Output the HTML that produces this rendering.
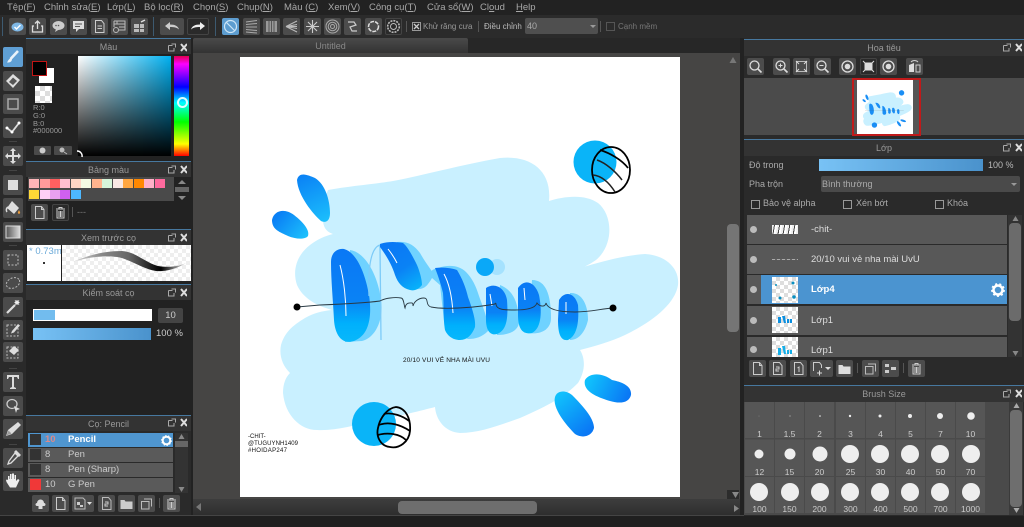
<!DOCTYPE html>
<html><head><meta charset="utf-8"><style>
html,body{margin:0;padding:0;width:1024px;height:527px;overflow:hidden;background:#222;font-family:"Liberation Sans","Noto Sans CJK SC",sans-serif;font-size:9px;color:#aaa}
div,span.a,svg.a{position:absolute}
.m{top:2px;font-size:9.5px;line-height:11px;color:#a8a8a8;white-space:nowrap}
.b{width:17px;height:17px;background:#4c4c4c;border-radius:2px}
.b svg,.t svg{position:absolute;left:0;top:0;width:100%;height:100%}
.bd{background:#2a2a2a;box-shadow:0 0 0 1px #444 inset}
.t{left:3px;width:20px;height:20px;background:#4b4b4b;border-radius:2px}
.sp{left:9px;width:8px;height:1px;background:#444}
.h{height:15px;background:#333;color:#999;text-align:center;line-height:16px;font-size:9px}
.l{height:1px;background:#47789f}
.ic{width:16px;height:9px}
.ck{background-color:#fff;background-image:linear-gradient(45deg,#ddd 25%,transparent 25%,transparent 75%,#ddd 75%),linear-gradient(45deg,#ddd 25%,transparent 25%,transparent 75%,#ddd 75%);background-size:8px 8px;background-position:0 0,4px 4px}
.s{width:10px;height:9px}
.r{left:28px;width:145px;height:14px;background:#5a5a5a;color:#ccc;line-height:15px;font-size:9.5px}
.lr{left:747px;width:260px;background:#585858}
.lt{left:811px;color:#ddd;font-size:9.5px;white-space:nowrap}
.d{width:7px;height:7px;border-radius:50%;background:#bbb;left:750px}
.th{left:772px;width:26px;height:26px}
.c{width:29px;background:#565656}
.n{width:29px;text-align:center;color:#ccc;font-size:8.5px;line-height:10px}
.o{border-radius:50%;background:#eee}
.cb{width:7px;height:7px;border:1px solid #999}
.tx{white-space:nowrap;line-height:11px}
</style></head><body>

<!-- menu -->
<div class="m" style="left:7px">Tệp(<u>F</u>)</div>
<div class="m" style="left:44px">Chỉnh sửa(<u>E</u>)</div>
<div class="m" style="left:107px">Lớp(<u>L</u>)</div>
<div class="m" style="left:144px">Bộ lọc(<u>R</u>)</div>
<div class="m" style="left:193px">Chọn(<u>S</u>)</div>
<div class="m" style="left:237px">Chụp(<u>N</u>)</div>
<div class="m" style="left:284px">Màu (<u>C</u>)</div>
<div class="m" style="left:328px">Xem(<u>V</u>)</div>
<div class="m" style="left:369px">Công cụ(<u>T</u>)</div>
<div class="m" style="left:427px">Cửa sổ(<u>W</u>)</div>
<div class="m" style="left:480px">Cl<u>o</u>ud</div>
<div class="m" style="left:516px"><u>H</u>elp</div>

<!-- toolbar -->
<div style="left:0;top:15px;width:1024px;height:23px;background:#2b2b2b"></div>
<div style="left:2px;top:17px;width:1px;height:19px;background:#3d5a70"></div>
<div class="b" style="left:9px;top:18px"><svg viewBox="0 0 17 17"><ellipse cx="8.500" cy="9" rx="6" ry="4.500" fill="#7fb8e6"/><path d="M5.500 9l2 2 4-4" stroke="#fff" stroke-width="1.400" fill="none"/></svg></div>
<div class="b" style="left:29px;top:18px"><svg viewBox="0 0 17 17"><path d="M5 8H3.500v6h10V8H12M8.500 11V3M6 5.500l2.500-2.500L11 5.500" stroke="#ddd" stroke-width="1.300" fill="none"/></svg></div>
<div class="b" style="left:50px;top:18px"><svg viewBox="0 0 17 17"><ellipse cx="8.500" cy="7.500" rx="6" ry="4.500" fill="#ccc"/><path d="M6 11l-1 3 4-2.500z" fill="#ccc"/><circle cx="6" cy="7.500" r=".8" fill="#555"/><circle cx="8.500" cy="7.500" r=".8" fill="#555"/></svg></div>
<div class="b" style="left:70px;top:18px"><svg viewBox="0 0 17 17"><path d="M3 3h11v8H9l-3 3v-3H3z" fill="#ddd"/><path d="M5 6h7M5 8.500h5" stroke="#555"/></svg></div>
<div class="b" style="left:91px;top:18px"><svg viewBox="0 0 17 17"><path d="M4.500 2.500h6l2.500 3v9h-8.500zM6.500 8h4.500M6.500 10.500h4.500" stroke="#ccc" fill="none"/></svg></div>
<div class="b" style="left:111px;top:18px"><svg viewBox="0 0 17 17"><path d="M3 3h11v9H8M3 3v6M3 6h11M6 3v3M8 9h6" stroke="#bbb" fill="none"/><circle cx="5" cy="12" r="2.500" fill="none" stroke="#bbb"/></svg></div>
<div class="b" style="left:131px;top:18px"><svg viewBox="0 0 17 17"><path d="M3 6h5v4H3zM9 6h4v4H9zM3 11h5v3H3zM9 11h4v3H9z" fill="#bbb"/><path d="M10 4l4-2" stroke="#ddd" stroke-width="1.500"/></svg></div>
<div style="left:153px;top:17px;width:1px;height:19px;background:#3d5a70"></div>
<div class="b" style="left:160px;top:18px;width:24px"><svg viewBox="0 0 24 17"><path d="M5 8l5-4v2.500c5 0 8 1.500 9 5-2-2-5-2.500-9-2.500v3z" fill="#ccc"/></svg></div>
<div class="b bd" style="left:187px;top:18px;width:22px"><svg viewBox="0 0 22 17"><path d="M18 8l-5-4v2.500c-5 0-8 1.500-9 5 2-2 5-2.500 9-2.500v3z" fill="#eee"/></svg></div>
<div style="left:215px;top:17px;width:1px;height:19px;background:#3d5a70"></div>
<div class="b" style="left:222px;top:18px;background:#5d9dd0"><svg viewBox="0 0 17 17"><circle cx="8.500" cy="8.500" r="6" fill="none" stroke="#cfe6f7" stroke-width="1.200"/><path d="M4.500 4.500l8 8" stroke="#cfe6f7" stroke-width="1.200"/></svg></div>
<div class="b" style="left:243px;top:18px"><svg viewBox="0 0 17 17"><path d="M3 4l11-1.500M3 6.500l11-1M3 9h11M3 11.500l11 1M3 14l11 1" stroke="#aaa"/></svg></div>
<div class="b" style="left:263px;top:18px"><svg viewBox="0 0 17 17"><path d="M3 3h11v11H3z" fill="#999"/><path d="M6 3v11M8.500 3v11M11 3v11" stroke="#555"/></svg></div>
<div class="b" style="left:283px;top:18px"><svg viewBox="0 0 17 17"><path d="M3 8.500L14 3M3 8.500L14 6.500M3 8.500h11M3 8.500l11 2M3 8.500L14 14" stroke="#bbb"/></svg></div>
<div class="b" style="left:304px;top:18px"><svg viewBox="0 0 17 17"><path d="M8.500 2v13M2 8.500h13M4 4l9 9M13 4l-9 9" stroke="#ccc" stroke-width="1.100"/></svg></div>
<div class="b" style="left:324px;top:18px"><svg viewBox="0 0 17 17"><circle cx="8.500" cy="8.500" r="6.500" fill="none" stroke="#aaa"/><circle cx="8.500" cy="8.500" r="4.300" fill="none" stroke="#aaa"/><circle cx="8.500" cy="8.500" r="2" fill="none" stroke="#aaa"/></svg></div>
<div class="b" style="left:344px;top:18px"><svg viewBox="0 0 17 17"><path d="M4 4h6l2 3-6 2 2 4h5" stroke="#ccc" stroke-width="1.200" fill="none"/></svg></div>
<div class="b" style="left:365px;top:18px"><svg viewBox="0 0 17 17"><circle cx="8.500" cy="8.500" r="5" fill="none" stroke="#ddd" stroke-width="1.500" stroke-dasharray="4 1"/></svg></div>
<div class="b bd" style="left:385px;top:18px"><svg viewBox="0 0 17 17"><circle cx="8.500" cy="8.500" r="5.800" fill="none" stroke="#bbb" stroke-width="1.600" stroke-dasharray="2 1"/><circle cx="8.500" cy="8.500" r="3" fill="none" stroke="#bbb"/></svg></div>
<div style="left:406px;top:21px;width:1px;height:11px;background:#555"></div>
<div style="left:412px;top:22px;width:7px;height:7px;border:1px solid #999"><svg class="a" style="left:0;top:0" width="7" height="7"><path d="M1 1l5 5M6 1l-5 5" stroke="#ccc" stroke-width="1.300"/></svg></div>
<div class="tx" style="left:423px;top:21px;color:#999;font-size:8px">Khử răng cưa</div>
<div style="left:478px;top:21px;width:1px;height:11px;background:#555"></div>
<div class="tx" style="left:484px;top:21px;color:#bbb;font-size:8px">Điều chỉnh</div>
<div style="left:525px;top:18px;width:73px;height:16px;background:#4f4f4f;border-radius:2px;color:#aaa;line-height:17px;text-indent:2px">40</div>
<div style="left:590px;top:25px;border:3px solid transparent;border-top:3px solid #999"></div>
<div style="left:600px;top:21px;width:1px;height:11px;background:#555"></div>
<div style="left:606px;top:22px;width:7px;height:7px;border:1px solid #555"></div>
<div class="tx" style="left:618px;top:21px;color:#777;font-size:8px">Cạnh mềm</div>

<!-- tools -->
<div style="left:0;top:38px;width:26px;height:478px;background:#2a2a2a"></div>
<div class="sp" style="top:141px"></div><div class="sp" style="top:170px"></div><div class="sp" style="top:245px"></div><div class="sp" style="top:368px"></div><div class="sp" style="top:444px"></div>
<div class="t" style="top:47px;background:#5f9fd4"><svg viewBox="0 0 20 20"><path d="M15 4L7.500 12" stroke="#e8f2fa" stroke-width="2.600"/><path d="M7.500 11.500c-2 .5-2.500 2.500-3.500 4 2 0 4.500 0 5-3z" fill="#e8f2fa"/></svg></div>
<div class="t" style="top:71px"><svg viewBox="0 0 20 20"><path d="M10 3l7 6-7 8-7-7z" fill="#ddd"/><path d="M6 11l4-4.500 4 3.500-4 4z" fill="#555"/></svg></div>
<div class="t" style="top:94px"><svg viewBox="0 0 20 20"><rect x="5" y="5" width="10" height="10" fill="none" stroke="#aaa" stroke-width="1.500"/></svg></div>
<div class="t" style="top:118px"><svg viewBox="0 0 20 20"><path d="M4 10l5 4 7-9" stroke="#ddd" stroke-width="1.800" fill="none"/><circle cx="4" cy="10" r="1.500" fill="#fff"/><circle cx="9" cy="14" r="1.500" fill="#fff"/><circle cx="16" cy="5" r="1.500" fill="#fff"/></svg></div>
<div class="t" style="top:146px"><svg viewBox="0 0 20 20"><path d="M10 2l3 3h-2v4h4v-2l3 3-3 3v-2h-4v4h2l-3 3-3-3h2v-4H5v2l-3-3 3-3v2h4V5H7z" fill="#ddd"/></svg></div>
<div class="t" style="top:175px"><svg viewBox="0 0 20 20"><rect x="5" y="5" width="10" height="10" fill="#ddd"/></svg></div>
<div class="t" style="top:198px"><svg viewBox="0 0 20 20"><path d="M9 3l7 7-5 6-7-6z" fill="#ddd"/><path d="M5 9c-2 1-2 4-1 5" stroke="#ddd" stroke-width="1.500" fill="none"/><path d="M16 12c1 2 2 3 0 4-2-1-1-2 0-4z" fill="#e89a3c"/></svg></div>
<div class="t" style="top:222px"><svg viewBox="0 0 20 20"><defs><linearGradient id="tg" x1="0" y1="0" x2="1" y2="0"><stop offset="0" stop-color="#555"/><stop offset="1" stop-color="#ddd"/></linearGradient></defs><rect x="3" y="4" width="14" height="12" fill="url(#tg)" stroke="#ddd"/></svg></div>
<div class="t" style="top:250px"><svg viewBox="0 0 20 20"><rect x="5" y="5" width="10" height="10" fill="none" stroke="#bbb" stroke-dasharray="2 1.500"/></svg></div>
<div class="t" style="top:273px"><svg viewBox="0 0 20 20"><ellipse cx="10" cy="10" rx="7" ry="5" fill="none" stroke="#bbb" stroke-dasharray="2 1.500" transform="rotate(-25 10 10)"/></svg></div>
<div class="t" style="top:297px"><svg viewBox="0 0 20 20"><path d="M4 16l8-8" stroke="#ddd" stroke-width="2.200"/><path d="M14 3v5M11.500 5.500h5M12 3.500l4 4M16 3.500l-4 4" stroke="#eee"/></svg></div>
<div class="t" style="top:320px"><svg viewBox="0 0 20 20"><rect x="4" y="5" width="11" height="11" fill="none" stroke="#bbb" stroke-dasharray="2 1.500"/><path d="M9 11l6-7 2 1.500-6 7-3 1z" fill="#ddd"/></svg></div>
<div class="t" style="top:342px"><svg viewBox="0 0 20 20"><rect x="4" y="5" width="11" height="11" fill="none" stroke="#bbb" stroke-dasharray="2 1.500"/><path d="M6 9l5-5 5 4-5 5z" fill="#ddd"/></svg></div>
<div class="t" style="top:372px"><svg viewBox="0 0 20 20"><path d="M4 3h12v4h-1l-1-2h-3v10l2 1v1H7v-1l2-1V5H6L5 7H4z" fill="#ddd"/></svg></div>
<div class="t" style="top:396px"><svg viewBox="0 0 20 20"><ellipse cx="9" cy="8" rx="5" ry="4.500" fill="none" stroke="#ccc" stroke-width="1.300"/><path d="M11 10l6 3-3 1-1 3z" fill="#ddd"/></svg></div>
<div class="t" style="top:419px"><svg viewBox="0 0 20 20"><path d="M15 3l3 3-9 9-6 2 2-6z" fill="#ddd"/><path d="M3.500 16.500l2-5 3 3z" fill="#999"/></svg></div>
<div class="t" style="top:448px"><svg viewBox="0 0 20 20"><path d="M12 5l3 3-7 7-3 1 1-3z" fill="none" stroke="#ddd" stroke-width="1.300"/><path d="M11 4l2-2 5 5-2 2z" fill="#ddd"/></svg></div>
<div class="t" style="top:471px"><svg viewBox="0 0 20 20"><path d="M5 9V5h1.500v3h.5V3h1.500v5h.5V2.500H11V8h.5V4H13v6l2-2 1.500 1-3.500 7.500H7L3.500 11 3 9l1-.5z" fill="#eee"/></svg></div>

<!-- left: colour panel -->
<div class="l" style="left:26px;top:38px;width:165px"></div>
<div class="h" style="left:26px;top:39px;width:165px">Màu</div>
<div class="ic" style="left:167px;top:43px"><svg class="a" style="left:0;top:0" width="20" height="9"><path d="M1.500 2.500h4M1.500 2.500v5.500h5.500V5M4.500 1h4v3.500" stroke="#aaa" fill="none"/><path d="M14 1l6 7M20 1l-6 7" stroke="#ddd" stroke-width="2"/></svg></div>
<div style="left:26px;top:54px;width:165px;height:107px;background:#222"></div>
<div style="left:39px;top:68px;width:15px;height:15px;background:#fff"></div>
<div style="left:32px;top:61px;width:13px;height:13px;background:#000;border:1.500px solid #c01515"></div>
<div class="ck" style="left:35px;top:86px;width:17px;height:17px;background-size:10px 10px;background-position:0 0,5px 5px"></div>
<div class="tx" style="left:33px;top:104px;font-size:7.500px;line-height:8px;color:#999">R:0<br>G:0</div>
<div class="tx" style="left:33px;top:120px;height:6px;overflow:hidden;font-size:7.500px;line-height:8px;color:#999">B:0</div>
<div class="tx" style="left:33px;top:126px;font-size:7.500px;line-height:9px;color:#999">#000000</div>
<div style="left:34px;top:146px;width:17px;height:9px;background:#4a4a4a;border-radius:1px"><svg class="a" style="left:0;top:0" width="17" height="9"><circle cx="8.500" cy="4.500" r="3" fill="#ccc"/></svg></div>
<div style="left:54px;top:146px;width:18px;height:9px;background:#4a4a4a;border-radius:1px"><svg class="a" style="left:0;top:0" width="18" height="9"><circle cx="8" cy="4" r="2.500" fill="#bbb"/><path d="M10 6l3 2" stroke="#bbb"/></svg></div>
<div style="left:78px;top:56px;width:93px;height:100px;background:linear-gradient(to bottom,transparent,#000),linear-gradient(to right,#fff,#00b0f0)"></div>
<svg class="a" style="left:76px;top:150px" width="8" height="8"><path d="M1 1a5 5 0 0 1 5 6" stroke="#fff" stroke-width="1.500" fill="none"/></svg>
<div style="left:174px;top:56px;width:15px;height:100px;background:linear-gradient(to bottom,#e00050 0,#f0f 8%,#00f 31%,#0ff 47%,#0f0 66%,#ff0 88%,#f00 100%)"></div>
<div style="left:177px;top:97px;width:7px;height:7px;border-radius:50%;border:2px solid #dff;background:transparent"></div>

<!-- palette -->
<div class="l" style="left:26px;top:161px;width:165px"></div>
<div class="h" style="left:26px;top:162px;width:165px">Bảng màu</div>
<svg class="a" style="left:167px;top:165px" width="20" height="9"><path d="M1.500 2.500h4M1.500 2.500v5.500h5.500V5M4.500 1h4v3.500" stroke="#aaa" fill="none"/><path d="M14 1l6 7M20 1l-6 7" stroke="#ddd" stroke-width="2"/></svg>
<div style="left:28px;top:177px;width:146px;height:24px;background:#4a4a4a"></div>
<div class="s" style="left:29px;top:179px;background:#ffb6b9"></div>
<div class="s" style="left:40px;top:179px;background:#ff9a9a"></div>
<div class="s" style="left:50px;top:179px;background:#ff6060"></div>
<div class="s" style="left:60px;top:179px;background:#ffc0d0"></div>
<div class="s" style="left:71px;top:179px;background:#ffd6c4"></div>
<div class="s" style="left:81px;top:179px;background:#f5fbe2"></div>
<div class="s" style="left:92px;top:179px;background:#ffb48e"></div>
<div class="s" style="left:102px;top:179px;background:#d6f5da"></div>
<div class="s" style="left:113px;top:179px;background:#f8e8e4"></div>
<div class="s" style="left:123px;top:179px;background:#ffa640"></div>
<div class="s" style="left:134px;top:179px;background:#ff8800"></div>
<div class="s" style="left:144px;top:179px;background:#ffb0c8"></div>
<div class="s" style="left:155px;top:179px;background:#ff6a9e"></div>
<div class="s" style="left:29px;top:190px;background:#ffd836"></div>
<div class="s" style="left:40px;top:190px;background:#ffcff5"></div>
<div class="s" style="left:50px;top:190px;background:#e8a0f0"></div>
<div class="s" style="left:60px;top:190px;background:#d060f0"></div>
<div class="s" style="left:71px;top:190px;background:#4db8ff"></div>
<svg class="a" style="left:175px;top:180px" width="14" height="20"><path d="M7 0l4 4H3zM7 20l-4-4h8z" fill="#888"/><rect x="0" y="7" width="14" height="5" fill="#666"/></svg>
<div class="b" style="left:31px;top:204px"><svg viewBox="0 0 17 17"><path d="M4.500 2.500h6l2.500 3v9h-8.500zM10.500 2.500v3h2.500" stroke="#ccc" fill="none"/></svg></div>
<div class="b bd" style="left:52px;top:204px"><svg viewBox="0 0 17 17"><path d="M4 5h9M7 5V3.500h3V5M5 6v8h7V6M7 7v6M8.500 7v6M10 7v6" stroke="#ccc" fill="none"/></svg></div>
<div style="left:72px;top:207px;width:1px;height:10px;background:#555"></div>
<div class="tx" style="left:77px;top:207px;color:#777">---</div>

<!-- brush preview -->
<div class="l" style="left:26px;top:229px;width:165px"></div>
<div class="h" style="left:26px;top:230px;width:165px">Xem trước cọ</div>
<svg class="a" style="left:167px;top:233px" width="20" height="9"><path d="M1.500 2.500h4M1.500 2.500v5.500h5.500V5M4.500 1h4v3.500" stroke="#aaa" fill="none"/><path d="M14 1l6 7M20 1l-6 7" stroke="#ddd" stroke-width="2"/></svg>
<div class="ck" style="left:62px;top:245px;width:129px;height:36px;background-size:8px 8px;background-image:linear-gradient(45deg,#eee 25%,transparent 25%,transparent 75%,#eee 75%),linear-gradient(45deg,#eee 25%,transparent 25%,transparent 75%,#eee 75%)"></div>
<div style="left:27px;top:245px;width:34px;height:36px;background:#fff;overflow:hidden"><div class="tx" style="left:2px;top:1px;color:#6aa9d8;font-size:9.500px">* 0.73mm</div><div style="left:16px;top:17px;width:2px;height:2px;background:#333"></div></div>
<svg class="a" style="left:62px;top:245px" width="129" height="36"><defs><linearGradient id="st" x1="0" x2="1" y1="0" y2="0"><stop offset="0" stop-color="#ddd"/><stop offset=".25" stop-color="#8a8a8a"/><stop offset=".5" stop-color="#666"/><stop offset=".78" stop-color="#000"/><stop offset="1" stop-color="#ddd"/></linearGradient></defs><path d="M10 17C25 11 40 6 60 6c14 1 22 11 36 15 12 2 22 0 28-3-6 4-18 9-30 8C80 24 68 14 55 12 38 10 24 13 10 17z" fill="url(#st)"/></svg>

<!-- brush control -->
<div class="l" style="left:26px;top:284px;width:165px"></div>
<div class="h" style="left:26px;top:285px;width:165px">Kiểm soát cọ</div>
<svg class="a" style="left:167px;top:288px" width="20" height="9"><path d="M1.500 2.500h4M1.500 2.500v5.500h5.500V5M4.500 1h4v3.500" stroke="#aaa" fill="none"/><path d="M14 1l6 7M20 1l-6 7" stroke="#ddd" stroke-width="2"/></svg>
<div style="left:33px;top:309px;width:119px;height:12px;background:#fff"></div>
<div style="left:34px;top:310px;width:21px;height:10px;background:#72bcee"></div>
<div style="left:158px;top:308px;width:25px;height:15px;background:#444;border-radius:2px;text-align:center;line-height:15px;color:#ccc;font-size:9.500px">10</div>
<div style="left:33px;top:328px;width:118px;height:12px;background:linear-gradient(to right,#78c2f5,#4a92cc)"></div>
<div class="tx" style="left:156px;top:328px;color:#ccc;font-size:9.500px">100 %</div>

<!-- brush list -->
<div class="l" style="left:26px;top:415px;width:165px;background:#47789f"></div>
<div class="h" style="left:26px;top:416px;width:165px">Cọ: Pencil</div>
<svg class="a" style="left:167px;top:418px" width="20" height="9"><path d="M1.500 2.500h4M1.500 2.500v5.500h5.500V5M4.500 1h4v3.500" stroke="#aaa" fill="none"/><path d="M14 1l6 7M20 1l-6 7" stroke="#ddd" stroke-width="2"/></svg>
<div style="left:26px;top:431px;width:165px;height:85px;background:#2a2a2a"></div>
<div class="r" style="top:433px;background:#4f96d0"></div>
<div class="r" style="top:448px"></div>
<div class="r" style="top:463px"></div>
<div class="r" style="top:478px"></div>
<div style="left:30px;top:434px;width:11px;height:11px;background:#333"></div>
<div style="left:30px;top:449px;width:11px;height:11px;background:#333"></div>
<div style="left:30px;top:464px;width:11px;height:11px;background:#333"></div>
<div style="left:30px;top:479px;width:11px;height:11px;background:#f03838"></div>
<div class="tx" style="left:45px;top:434px;color:#d98a8a;font-weight:bold;font-size:9.500px">10</div>
<div class="tx" style="left:45px;top:449px;color:#ccc;font-size:9.500px">8</div>
<div class="tx" style="left:45px;top:464px;color:#ccc;font-size:9.500px">8</div>
<div class="tx" style="left:45px;top:479px;color:#ccc;font-size:9.500px">10</div>
<div class="tx" style="left:68px;top:434px;color:#fff;font-weight:bold;font-size:9.500px">Pencil</div>
<div class="tx" style="left:68px;top:449px;color:#ccc;font-size:9.500px">Pen</div>
<div class="tx" style="left:68px;top:464px;color:#ccc;font-size:9.500px">Pen (Sharp)</div>
<div class="tx" style="left:68px;top:479px;color:#ccc;font-size:9.500px">G Pen</div>
<svg class="a" style="left:161px;top:435px" width="11" height="11"><circle cx="5.500" cy="5.500" r="3.800" fill="none" stroke="#fff" stroke-width="2"/><circle cx="5.500" cy="5.500" r="4.800" fill="none" stroke="#fff" stroke-width="1.200" stroke-dasharray="1.500 1.500"/></svg>
<div style="left:175px;top:433px;width:13px;height:60px;background:#333"></div>
<div style="left:175px;top:441px;width:13px;height:6px;background:#666"></div>
<svg class="a" style="left:177px;top:434px" width="9" height="58"><path d="M4.500 0l3 5h-6zM4.500 58l-3-5h6z" fill="#888"/></svg>
<div class="b" style="left:32px;top:495px"><svg viewBox="0 0 17 17"><path d="M5 8a3.500 3.500 0 0 1 7 0c2 0 2 3 0 3h-1.500v3h-4v-3H5c-2 0-2-3 0-3z" fill="#ddd"/></svg></div>
<div class="b" style="left:52px;top:495px"><svg viewBox="0 0 17 17"><path d="M4.500 2.500h6l2.500 3v9h-8.500zM10.500 2.500v3h2.500" stroke="#ccc" fill="none"/></svg></div>
<div class="b" style="left:72px;top:495px;width:22px"><svg viewBox="0 0 22 17"><path d="M3 3h8l2 2v9H3z" fill="none" stroke="#bbb"/><path d="M5 7h3v3H5zM8 10h3v2H8z" fill="#ccc"/><path d="M15 7h5l-2.500 3z" fill="#ddd"/></svg></div>
<div class="b" style="left:98px;top:495px"><svg viewBox="0 0 17 17"><path d="M4.500 2.500h6l2.500 3v9h-8.500z" stroke="#bbb" fill="none"/><path d="M7 7h3v2H7v2h3" stroke="#ccc" fill="none"/></svg></div>
<div class="b" style="left:118px;top:495px"><svg viewBox="0 0 17 17"><path d="M2.500 5h4l1 1.500h7V14h-12z" fill="#ccc"/></svg></div>
<div class="b" style="left:138px;top:495px"><svg viewBox="0 0 17 17"><path d="M3.500 6.500h7.500v7.500H3.500zM6 4h7.500v7.500" stroke="#bbb" fill="none"/></svg></div>
<div style="left:159px;top:498px;width:1px;height:10px;background:#555"></div>
<div class="b" style="left:163px;top:495px"><svg viewBox="0 0 17 17"><path d="M4 5h9M7 5V3.500h3V5M5 6v8h7V6M7 7v6M8.500 7v6M10 7v6" stroke="#ccc" fill="none"/></svg></div>

<!-- center -->
<div style="left:193px;top:38px;width:547px;height:478px;background:#464544"></div>
<div style="left:193px;top:38px;width:547px;height:15px;background:#272727"></div>
<div style="left:193px;top:38px;width:275px;height:15px;background:linear-gradient(#4a4a4a,#333);border-radius:2px 2px 0 0;color:#888;text-align:center;line-height:16px">Untitled</div>
<div style="left:240px;top:57px;width:440px;height:440px;background:#fff"></div>

<svg class="a" style="left:240px;top:57px" width="440" height="440" viewBox="240 57 440 440">
<defs>
<linearGradient id="g1" x1="0" y1="0" x2="0" y2="1"><stop offset="0" stop-color="#0a78f5"/><stop offset=".55" stop-color="#0a82f5"/><stop offset=".8" stop-color="#00b0fc"/><stop offset="1" stop-color="#08b8fb"/></linearGradient>
<linearGradient id="g2" gradientUnits="userSpaceOnUse" x1="388" y1="245" x2="418" y2="292"><stop offset="0" stop-color="#0a78f5"/><stop offset=".5" stop-color="#0a82f5"/><stop offset="1" stop-color="#08b8fb"/></linearGradient>
<linearGradient id="d1" gradientUnits="userSpaceOnUse" x1="305" y1="172" x2="328" y2="222"><stop offset="0" stop-color="#0a80f5"/><stop offset="1" stop-color="#1cc0fc"/></linearGradient>
<linearGradient id="d2" gradientUnits="userSpaceOnUse" x1="278" y1="215" x2="305" y2="238"><stop offset="0" stop-color="#0a80f5"/><stop offset="1" stop-color="#1cc0fc"/></linearGradient>
<linearGradient id="d3" gradientUnits="userSpaceOnUse" x1="590" y1="378" x2="628" y2="396"><stop offset="0" stop-color="#10c0fc"/><stop offset="1" stop-color="#0a78f5"/></linearGradient>
<linearGradient id="d4" gradientUnits="userSpaceOnUse" x1="558" y1="396" x2="588" y2="432"><stop offset="0" stop-color="#10c0fc"/><stop offset="1" stop-color="#0a78f5"/></linearGradient>
</defs>
<path fill="#c9f0ff" d="M328 190C350 186 375 184 393 181C425 175 460 165 500 158C530 155 552 170 549 201C565 196 585 194 598 203C613 215 614 245 596 260C582 270 565 274 548 278C580 268 615 256 645 254C665 255 680 268 678 285C675 305 650 323 625 335C610 342 595 346 580 350C585 358 586 370 578 383C565 396 550 405 520 418C500 425 480 433 460 433C445 432 436 420 435 407C420 411 395 417 375 421C355 425 335 431 317 430C300 430 285 415 283 393C283 385 285 378 290 373C282 365 279 355 281 345C285 332 292 326 305 318C314 313 322 311 332 310C315 305 303 298 297 285C292 270 297 255 310 245C318 239 325 236 333 234C327 232 322 228 323 215C323 205 325 197 328 190Z"/>
<!-- drops -->
<path fill="url(#d1)" d="M297 180C299 171 308 175 315 178C325 184 330 200 330 213C330 222 325 223 321 221C313 214 298 196 297 180Z"/>
<path fill="url(#d2)" d="M272 220C274 210 285 208 294 215C303 222 310 230 308 236C305 240 295 239 288 236C280 232 272 230 272 220Z"/>
<path fill="url(#d3)" d="M585 380C590 372 603 373 612 380C622 382 632 386 631 395C629 403 620 404 610 401C600 398 582 392 585 380Z"/>
<path fill="url(#d4)" d="M555 397C557 390 566 390 572 395C582 405 594 418 594 428C592 436 583 439 575 434C566 425 552 408 555 397Z"/>
<!-- shadows -->
<path fill="#6fd2ff" d="M350 250C365 252 378 275 381 300C384 320 375 338 362 341L345 342Z"/>
<path fill="#6fd2ff" d="M397 242C408 241 414 245 420 253C425 262 430 268 433 273C430 282 427 288 420 289C412 290 405 285 403 280Z"/>
<path fill="#6fd2ff" d="M418 288C428 286 426 269 438 268C450 264 460 266 466 272C472 278 476 286 479 296C484 310 489 322 488 331C482 337 476 339 468 339L445 330L440 285L432 278C428 285 425 288 418 288Z"/>
<circle cx="497" cy="267" r="8" fill="#a5e2fe"/>
<path fill="#6fd2ff" d="M500 285C512 290 518 300 519 320C520 330 510 335 497 335Z"/>
<path fill="#6fd2ff" d="M532 280C546 280 551 295 551 318C551 330 540 335 528 333Z"/>
<path fill="#6fd2ff" d="M570 293C582 292 588 305 588 320C585 333 578 340 570 340Z"/>
<!-- letters -->
<path fill="url(#g1)" d="M331 262C331 252 338 248 344 249C356 252 365 272 369 295C372 315 370 335 354 341C342 345 335 335 334 320C333 300 331 280 331 262Z"/>
<path fill="none" stroke="#7dcbf8" stroke-width="1.300" d="M369 296C368 270 370 248 380 245M380 246L381 340"/>
<path fill="url(#g2)" d="M380 244C388 241 398 242 403 243C408 247 413 257 417 265C420 272 422 280 422 285C418 290 414 291 410 290C402 288 398 283 395 275C392 265 386 255 380 247Z"/>
<path fill="url(#g1)" d="M435 268C442 267 452 268 457 270C462 278 466 288 468 297C472 308 476 320 475 327C472 335 467 340 460 340C452 340 447 335 445 330C443 318 444 305 443 293C441 285 439 278 435 268Z"/>
<circle cx="485" cy="267" r="9" fill="#0aa8f8"/>
<path fill="url(#g1)" d="M486 288C495 282 505 288 507 300C508 315 508 330 497 334C490 336 486 330 486 320Z"/>
<path fill="url(#g1)" d="M518 288C525 278 535 282 539 295C542 310 542 328 532 333C522 335 518 328 518 315Z"/>
<path fill="url(#g1)" d="M559 300C565 290 575 293 578 305C579 320 578 335 568 340C561 341 558 335 558 320Z"/>
<!-- highlights -->
<path stroke="#fff" fill="none" stroke-width="1" d="M340 265C344 280 346 300 346 316M388 249C392 254 395 259 397 263M444 274C449 283 452 297 453 313M490 294l2 12M524 288l1 12M566 302v12"/>
<!-- line -->
<path fill="none" stroke="#2a3a44" stroke-width=".9" d="M297 307L320 305C345 304 365 303 380 301C385 298 395 297 401 298C404 298 404 306 405 308C406 302 410 303 412 303C413 303 413 306 413 306C414 302 418 298 424 298C429 298 425 305 431 307C445 310 480 307 495 304C495 303 496 303 496 304C496 310 505 310 515 310C525 310 535 309 537 303C539 306 545 308 546 303C548 310 560 312 575 312C590 312 600 309 613 308"/>
<circle cx="297" cy="307" r="3.500" fill="#000"/><circle cx="613" cy="308" r="3.500" fill="#000"/>
<!-- circles / eggs -->
<circle cx="595" cy="162" r="21.500" fill="#0ab4f8"/>
<g fill="none" stroke="#000">
<ellipse cx="611" cy="170" rx="19" ry="23" stroke-width="1.800"/>
<path stroke-width="1.700" d="M600 150C610 153 622 160 628 168"/>
<path stroke="#222" stroke-width="1.500" d="M597 160C606 163 616 172 622 180"/>
<path stroke="#222" stroke-width="1.500" d="M593 175C603 176 610 184 615 192"/>
</g>
<circle cx="374" cy="424" r="22" fill="#0ab4f8"/>
<g fill="none" stroke="#000">
<path stroke-width="1.800" d="M396 407C406 408 411 419 410 431C409 442 399 449 390 447C380 446 376 436 378 428C380 417 388 408 396 407Z"/>
<path stroke-width="1.700" d="M384 414C392 412 403 416 409 421"/>
<path stroke-width="1.700" d="M379 425C389 421 401 425 410 431"/>
<path stroke-width="1.700" d="M378 435C388 432 400 434 406 440"/>
</g>
<text x="403" y="362" font-family="Liberation Sans" font-size="6.500" fill="#111" textLength="87">20/10 VUI VẺ NHA MÀI UVU</text>
<text x="248" y="438" font-family="Liberation Sans" font-size="6" fill="#111">-CHIT-</text>
<text x="248" y="445" font-family="Liberation Sans" font-size="6" fill="#111" textLength="50">@TUGUYNH1409</text>
<text x="248" y="452" font-family="Liberation Sans" font-size="6" fill="#111" textLength="39">#HOIDAP247</text>
</svg>

<!-- center scrollbars -->
<div style="left:727px;top:224px;width:12px;height:108px;background:#757575;border-radius:4px"></div>
<svg class="a" style="left:729px;top:56px" width="8" height="8"><path d="M4 1l3.500 6h-7z" fill="#777"/></svg>
<div style="left:193px;top:499px;width:547px;height:16px;background:linear-gradient(#3d3d3d,#2e2e2e)"></div>
<div style="left:398px;top:501px;width:139px;height:13px;background:#6e6e6e;border-radius:4px"></div>
<svg class="a" style="left:195px;top:503px" width="8" height="8"><path d="M6 0v8L1 4z" fill="#777"/></svg>
<div style="left:727px;top:490px;width:12px;height:9px;background:#2c2c2c"></div>
<svg class="a" style="left:732px;top:491px" width="8" height="22"><path d="M0 1h7l-3.500 6zM2 14v7l5-3.500z" fill="#888"/></svg>
<div style="left:0;top:515px;width:1024px;height:1px;background:#444"></div>
<div style="left:0;top:516px;width:1024px;height:11px;background:#1f1f1f"></div>

<!-- right: navigator -->
<div style="left:744px;top:38px;width:280px;height:478px;background:#2a2a2a"></div>
<div class="l" style="left:744px;top:39px;width:280px"></div>
<div class="h" style="left:744px;top:40px;width:280px;height:16px">Hoa tiêu</div>
<svg class="a" style="left:1002px;top:43px" width="20" height="9"><path d="M1.500 2.500h4M1.500 2.500v5.500h5.500V5M4.500 1h4v3.500" stroke="#aaa" fill="none"/><path d="M14 1l6 7M20 1l-6 7" stroke="#ddd" stroke-width="2"/></svg>
<div class="b" style="left:747px;top:58px"><svg viewBox="0 0 17 17"><circle cx="7.500" cy="7.500" r="4.500" fill="none" stroke="#ddd" stroke-width="1.300"/><path d="M11 11l3.500 3.500" stroke="#ddd" stroke-width="1.600"/></svg></div>
<div class="b" style="left:773px;top:58px"><svg viewBox="0 0 17 17"><circle cx="7.500" cy="7.500" r="4.500" fill="none" stroke="#ddd" stroke-width="1.300"/><path d="M11 11l3.500 3.500" stroke="#ddd" stroke-width="1.600"/><path d="M5.500 7.500h4M7.500 5.500v4" stroke="#ddd"/></svg></div>
<div class="b" style="left:793px;top:58px"><svg viewBox="0 0 17 17"><rect x="3.500" y="3.500" width="10" height="10" fill="none" stroke="#bbb"/><path d="M3 3l3 3M14 3l-3 3M3 14l3-3M14 14l-3-3" stroke="#ddd"/></svg></div>
<div class="b" style="left:814px;top:58px"><svg viewBox="0 0 17 17"><circle cx="7.500" cy="7.500" r="4.500" fill="none" stroke="#ddd" stroke-width="1.300"/><path d="M11 11l3.500 3.500" stroke="#ddd" stroke-width="1.600"/><path d="M5.500 7.500h4" stroke="#ddd"/></svg></div>
<div class="b" style="left:839px;top:58px"><svg viewBox="0 0 17 17"><circle cx="8.500" cy="8.500" r="5.500" fill="none" stroke="#ddd" stroke-width="1.300"/><circle cx="8.500" cy="8.500" r="2.800" fill="#ddd"/></svg></div>
<div class="b bd" style="left:860px;top:58px"><svg viewBox="0 0 17 17"><rect x="4.500" y="4.500" width="8" height="8" fill="#ddd"/><path d="M3 3l3 3M14 3l-3 3M3 14l3-3M14 14l-3-3" stroke="#ddd"/></svg></div>
<div class="b" style="left:880px;top:58px"><svg viewBox="0 0 17 17"><circle cx="8.500" cy="8.500" r="5.500" fill="none" stroke="#ddd" stroke-width="1.300"/><circle cx="8.500" cy="8.500" r="2.800" fill="#ddd"/></svg></div>
<div class="b" style="left:906px;top:58px"><svg viewBox="0 0 17 17"><path d="M3 7l5-2v9H3z" fill="#ddd"/><path d="M10 7h4v7h-4zM5 4c2-2 5-2 7 0" fill="none" stroke="#ccc"/></svg></div>
<div style="left:744px;top:78px;width:280px;height:57px;background:#4b4b4b"></div>
<div style="left:852px;top:78px;width:65px;height:54px;border:2px solid #c01a1a;background:#555"></div>
<div style="left:857px;top:80px;width:56px;height:54px;background:#fff"></div>
<svg class="a" style="left:857px;top:80px" width="56" height="54" viewBox="240 57 440 440">
<path fill="#c9f0ff" d="M328 190C400 180 460 165 500 158C530 155 552 170 549 201C585 194 613 215 610 240C600 265 570 275 548 278C580 268 615 256 645 254C665 255 680 268 678 285C675 305 650 323 580 350C585 358 586 370 578 383C550 405 500 425 460 433C445 432 436 420 435 407C395 417 335 431 317 430C300 430 285 415 283 393C283 385 285 378 290 373C282 365 279 355 281 345C285 332 300 315 332 310C315 305 303 298 297 285C292 270 297 255 333 234C327 232 322 228 328 190Z"/>
<g fill="#1a8ef5"><path d="M331 262C331 245 350 245 360 265C372 290 375 335 354 341C335 345 331 300 331 262Z"/><path d="M380 244C395 238 420 250 422 285C418 292 400 288 385 250Z"/><path d="M438 268C460 266 475 320 468 333C460 345 445 342 440 330Z"/><path d="M486 288C495 282 508 290 507 315C508 330 497 340 486 325Z"/><path d="M518 288C525 278 542 280 541 315C542 328 532 340 518 315Z"/><path d="M559 300C565 290 580 293 578 320C578 335 568 345 558 320Z"/><ellipse cx="313" cy="198" rx="10" ry="24" transform="rotate(-22 313 198)"/><ellipse cx="290" cy="225" rx="8" ry="16" transform="rotate(-50 290 225)"/><ellipse cx="608" cy="389" rx="24" ry="9" transform="rotate(18 608 389)"/><ellipse cx="574" cy="414" rx="10" ry="26" transform="rotate(-35 574 414)"/><circle cx="595" cy="162" r="22"/><circle cx="374" cy="424" r="22"/></g>
<path d="M297 307H613" stroke="#555"/>
</svg>

<!-- layers -->
<div class="l" style="left:744px;top:139px;width:280px"></div>
<div class="h" style="left:744px;top:140px;width:280px;height:16px">Lớp</div>
<svg class="a" style="left:1002px;top:143px" width="20" height="9"><path d="M1.500 2.500h4M1.500 2.500v5.500h5.500V5M4.500 1h4v3.500" stroke="#aaa" fill="none"/><path d="M14 1l6 7M20 1l-6 7" stroke="#ddd" stroke-width="2"/></svg>
<div class="tx" style="left:749px;top:160px;color:#aaa">Độ trong</div>
<div style="left:819px;top:159px;width:164px;height:12px;background:linear-gradient(to right,#78c2f5,#4a92cc)"></div>
<div class="tx" style="left:988px;top:160px;color:#bbb">100 %</div>
<div class="tx" style="left:749px;top:179px;color:#aaa">Pha trộn</div>
<div style="left:821px;top:176px;width:199px;height:16px;background:#4a4a4a;border-radius:2px;color:#aaa;line-height:17px;text-indent:1px">Bình thường</div>
<div style="left:1011px;top:183px;border:3px solid transparent;border-top:3px solid #999"></div>
<div class="cb" style="left:751px;top:200px"></div>
<div class="tx" style="left:763px;top:198px;color:#aaa">Bảo vệ alpha</div>
<div class="cb" style="left:843px;top:200px"></div>
<div class="tx" style="left:856px;top:198px;color:#aaa">Xén bớt</div>
<div class="cb" style="left:935px;top:200px"></div>
<div class="tx" style="left:947px;top:198px;color:#aaa">Khóa</div>

<div class="lr" style="top:215px;height:29px"></div>
<div class="lr" style="top:245px;height:29px"></div>
<div class="lr" style="top:275px;height:29px"></div>
<div style="left:761px;top:275px;width:246px;height:29px;background:#4b94d0"></div>
<div class="lr" style="top:306px;height:29px"></div>
<div class="lr" style="top:337px;height:20px"></div>
<div class="d" style="top:226px"></div>
<div class="d" style="top:256px"></div>
<div class="d" style="top:286px"></div>
<div class="d" style="top:317px"></div>
<div class="d" style="top:346px"></div>
<div style="left:772px;top:225px;width:26px;height:9px;background:repeating-linear-gradient(100deg,#eee 0 2px,#444 2px 3px,#fff 3px 5px)"></div>
<div style="left:772px;top:259px;width:26px;height:1px;background:repeating-linear-gradient(90deg,#aaa 0 3px,#666 3px 5px)"></div>
<div class="ck th" style="top:277px"><svg class="a" style="left:0;top:0" width="26" height="26"><circle cx="21" cy="6" r="1.500" fill="#0a8fc0"/><circle cx="8" cy="21" r="1.500" fill="#0a8fc0"/><circle cx="22" cy="20" r="1.800" fill="#0a8fc0"/><circle cx="4" cy="8" r="1" fill="#0a8fc0"/></svg></div>
<div class="ck th" style="top:307px"><svg class="a" style="left:0;top:0" width="26" height="26"><path d="M6 10h3v6H6zM10 9h3l1 7h-2zM15 12h2v4h-2zM18 12h2v4h-2z" fill="#0a8fe0"/></svg></div>
<div style="left:772px;top:337px;width:26px;height:20px;overflow:hidden"><div class="ck" style="left:0;top:0;width:26px;height:26px"></div><svg class="a" style="left:0;top:0" width="26" height="20"><path d="M6 11h3v7H6zM10 9h3l1 8h-2zM15 13h2v4h-2zM18 13h2v4h-2z" fill="#14aee8"/></svg></div>
<div class="lt" style="top:224px">-chit-</div>
<div class="lt" style="top:254px">20/10 vui vẻ nha mài UvU</div>
<div class="lt" style="top:284px;color:#fff;font-weight:bold">Lớp4</div>
<div class="lt" style="top:315px">Lớp1</div>
<div class="lt" style="top:345px">Lớp1</div>
<svg class="a" style="left:991px;top:283px" width="14" height="14"><circle cx="7" cy="7" r="4.500" fill="none" stroke="#fff" stroke-width="2.500"/><circle cx="7" cy="7" r="6" fill="none" stroke="#fff" stroke-width="1.800" stroke-dasharray="2 2.200"/></svg>
<div style="left:1008px;top:215px;width:14px;height:142px;background:#333"></div>
<div style="left:1009px;top:223px;width:12px;height:98px;background:#6b6b6b;border-radius:4px"></div>
<svg class="a" style="left:1011px;top:216px" width="9" height="140"><path d="M4.500 0l3 5h-6zM4.500 140l-3-5h6z" fill="#888"/></svg>
<div class="b" style="left:749px;top:360px"><svg viewBox="0 0 17 17"><path d="M4.500 2.500h6l2.500 3v9h-8.500zM10.500 2.500v3h2.500" stroke="#ccc" fill="none"/></svg></div>
<div class="b" style="left:769px;top:360px"><svg viewBox="0 0 17 17"><path d="M4.500 2.500h6l2.500 3v9h-8.500z" stroke="#ccc" fill="none"/><path d="M7 7h3v2H7v2h3" stroke="#ccc" fill="none"/></svg></div>
<div class="b" style="left:790px;top:360px"><svg viewBox="0 0 17 17"><path d="M4.500 2.500h6l2.500 3v9h-8.500z" stroke="#ccc" fill="none"/><path d="M7.500 8l1.500-1v5" stroke="#ccc" fill="none"/></svg></div>
<div class="b" style="left:810px;top:360px;width:23px"><svg viewBox="0 0 23 17"><path d="M3.500 11V2.500h6l2 2.500v3" stroke="#ccc" fill="none"/><path d="M7 13h5M9.500 10.500v5" stroke="#ddd"/><path d="M15 7h6l-3 3z" fill="#ddd"/></svg></div>
<div class="b" style="left:836px;top:360px"><svg viewBox="0 0 17 17"><path d="M2.500 5h4l1 1.500h7V14h-12z" fill="#ddd"/></svg></div>
<div style="left:857px;top:363px;width:1px;height:10px;background:#555"></div>
<div class="b" style="left:862px;top:360px"><svg viewBox="0 0 17 17"><path d="M3.500 6.500h7.500v7.500H3.500zM6 4h7.500v7.500" stroke="#bbb" fill="none"/></svg></div>
<div class="b" style="left:882px;top:360px"><svg viewBox="0 0 17 17"><path d="M3 4h4v3H3zM3 10h4v3H3zM9 7h5v3H9z" fill="#ccc"/></svg></div>
<div style="left:903px;top:363px;width:1px;height:10px;background:#555"></div>
<div class="b" style="left:908px;top:360px"><svg viewBox="0 0 17 17"><path d="M4 5h9M7 5V3.500h3V5M5 6v8h7V6M7 7v6M8.500 7v6M10 7v6" stroke="#ccc" fill="none"/></svg></div>

<!-- brush size -->
<div class="l" style="left:744px;top:385px;width:280px"></div>
<div class="h" style="left:744px;top:386px;width:280px;height:16px">Brush Size</div>
<svg class="a" style="left:1002px;top:389px" width="20" height="9"><path d="M1.500 2.500h4M1.500 2.500v5.500h5.500V5M4.500 1h4v3.500" stroke="#aaa" fill="none"/><path d="M14 1l6 7M20 1l-6 7" stroke="#ddd" stroke-width="2"/></svg>
<div style="left:744px;top:402px;width:265px;height:113px;background:#4a4a4a"></div>
<svg class="a" style="left:744px;top:402px" width="241" height="111" viewBox="744 402 241 111">
<g fill="#565656"><rect x="745" y="402" width="29" height="36"/><rect x="775" y="402" width="29" height="36"/><rect x="805" y="402" width="29" height="36"/><rect x="836" y="402" width="29" height="36"/><rect x="866" y="402" width="29" height="36"/><rect x="896" y="402" width="29" height="36"/><rect x="926" y="402" width="29" height="36"/><rect x="956" y="402" width="29" height="36"/>
<rect x="745" y="439.500" width="29" height="36.500"/><rect x="775" y="439.500" width="29" height="36.500"/><rect x="805" y="439.500" width="29" height="36.500"/><rect x="836" y="439.500" width="29" height="36.500"/><rect x="866" y="439.500" width="29" height="36.500"/><rect x="896" y="439.500" width="29" height="36.500"/><rect x="926" y="439.500" width="29" height="36.500"/><rect x="956" y="439.500" width="29" height="36.500"/>
<rect x="745" y="477" width="29" height="36"/><rect x="775" y="477" width="29" height="36"/><rect x="805" y="477" width="29" height="36"/><rect x="836" y="477" width="29" height="36"/><rect x="866" y="477" width="29" height="36"/><rect x="896" y="477" width="29" height="36"/><rect x="926" y="477" width="29" height="36"/><rect x="956" y="477" width="29" height="36"/></g>
<g fill="#eee"><circle cx="759" cy="416" r=".3"/><circle cx="790" cy="416" r=".5"/><circle cx="820" cy="416" r=".8"/><circle cx="850" cy="416" r="1.200"/><circle cx="880" cy="416" r="1.500"/><circle cx="910" cy="416" r="2"/><circle cx="940" cy="416" r="3"/><circle cx="971" cy="416" r="3.800"/>
<circle cx="759" cy="454" r="4.500"/><circle cx="790" cy="454" r="5.500"/><circle cx="820" cy="454" r="7.500"/><circle cx="850" cy="454" r="9"/><circle cx="880" cy="454" r="9"/><circle cx="910" cy="454" r="9"/><circle cx="940" cy="454" r="9"/><circle cx="971" cy="454" r="9"/>
<circle cx="759" cy="492" r="9"/><circle cx="790" cy="492" r="9"/><circle cx="820" cy="492" r="9"/><circle cx="850" cy="492" r="9"/><circle cx="880" cy="492" r="9"/><circle cx="910" cy="492" r="9"/><circle cx="940" cy="492" r="9"/><circle cx="971" cy="492" r="9"/></g>
</svg>
<div class="n" style="left:745px;top:429px">1</div><div class="n" style="left:775px;top:429px">1.5</div><div class="n" style="left:805px;top:429px">2</div><div class="n" style="left:836px;top:429px">3</div><div class="n" style="left:866px;top:429px">4</div><div class="n" style="left:896px;top:429px">5</div><div class="n" style="left:926px;top:429px">7</div><div class="n" style="left:956px;top:429px">10</div>
<div class="n" style="left:745px;top:467px">12</div><div class="n" style="left:775px;top:467px">15</div><div class="n" style="left:805px;top:467px">20</div><div class="n" style="left:836px;top:467px">25</div><div class="n" style="left:866px;top:467px">30</div><div class="n" style="left:896px;top:467px">40</div><div class="n" style="left:926px;top:467px">50</div><div class="n" style="left:956px;top:467px">70</div>
<div class="n" style="left:745px;top:504px">100</div><div class="n" style="left:775px;top:504px">150</div><div class="n" style="left:805px;top:504px">200</div><div class="n" style="left:836px;top:504px">300</div><div class="n" style="left:866px;top:504px">400</div><div class="n" style="left:896px;top:504px">500</div><div class="n" style="left:926px;top:504px">700</div><div class="n" style="left:956px;top:504px">1000</div>
<div style="left:1009px;top:402px;width:14px;height:113px;background:#3a3a3a"></div>
<div style="left:1010px;top:410px;width:12px;height:97px;background:#6e6e6e;border-radius:4px"></div>
<svg class="a" style="left:1012px;top:403px" width="9" height="110"><path d="M4.500 0l3 5h-6zM4.500 110l-3-5h6z" fill="#aaa"/></svg>
</body></html>
